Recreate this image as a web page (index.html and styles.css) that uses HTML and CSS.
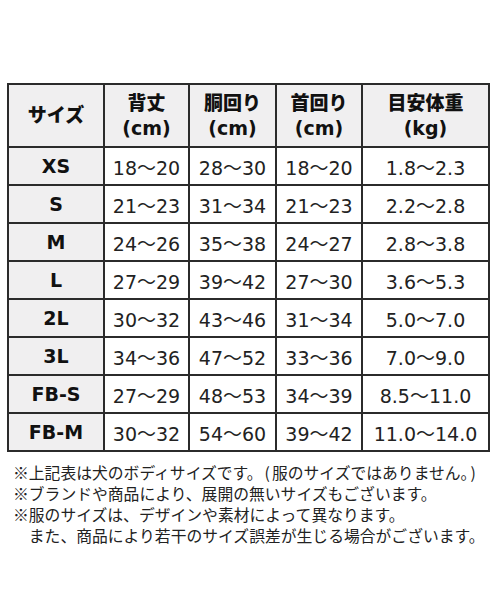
FILE: index.html
```html
<!DOCTYPE html>
<html lang="ja">
<head>
<meta charset="utf-8">
<link rel="stylesheet" href="styles.css">
</head>
<body>
<div class="page">
  <table class="size-table">
    <colgroup>
      <col class="c1"><col class="c2"><col class="c3"><col class="c4"><col class="c5">
    </colgroup>
    <thead>
      <tr>
        <th>サイズ</th>
        <th>背丈<br>(cm)</th>
        <th>胴回り<br>(cm)</th>
        <th>首回り<br>(cm)</th>
        <th>目安体重<br>(kg)</th>
      </tr>
    </thead>
    <tbody>
      <tr><th>XS</th><td>18〜20</td><td>28〜30</td><td>18〜20</td><td>1.8〜2.3</td></tr>
      <tr><th>S</th><td>21〜23</td><td>31〜34</td><td>21〜23</td><td>2.2〜2.8</td></tr>
      <tr><th>M</th><td>24〜26</td><td>35〜38</td><td>24〜27</td><td>2.8〜3.8</td></tr>
      <tr><th>L</th><td>27〜29</td><td>39〜42</td><td>27〜30</td><td>3.6〜5.3</td></tr>
      <tr><th>2L</th><td>30〜32</td><td>43〜46</td><td>31〜34</td><td>5.0〜7.0</td></tr>
      <tr><th>3L</th><td>34〜36</td><td>47〜52</td><td>33〜36</td><td>7.0〜9.0</td></tr>
      <tr><th>FB-S</th><td>27〜29</td><td>48〜53</td><td>34〜39</td><td>8.5〜11.0</td></tr>
      <tr><th>FB-M</th><td>30〜32</td><td>54〜60</td><td>39〜42</td><td>11.0〜14.0</td></tr>
    </tbody>
  </table>
  <div class="notes">
    <p>※上記表は犬のボディサイズです。<span class="paren">(</span>服のサイズではありません。<span class="paren">)</span></p>
    <p>※ブランドや商品により、展開の無いサイズもございます。</p>
    <p>※服のサイズは、デザインや素材によって異なります。</p>
    <p class="indent">また、商品により若干のサイズ誤差が生じる場合がございます。</p>
  </div>
</div>
</body>
</html>
```

FILE: styles.css
```css
html, body {
  margin: 0;
  padding: 0;
  background: #ffffff;
}
.page {
  padding: 83px 0 0 7px;
  color: #1a1a1a;
}
.size-table {
  border-collapse: collapse;
  table-layout: fixed;
  width: 481px;
  font-family: "DejaVu Sans", "Noto Sans CJK JP", sans-serif;
}
.c1 { width: 96px; }
.c2 { width: 85px; }
.c3 { width: 87px; }
.c4 { width: 86px; }
.c5 { width: 127px; }
.size-table th,
.size-table td {
  border: 2px solid #2b2b2b;
  text-align: center;
  padding: 0;
  height: 36px;
}
.size-table thead th {
  height: 61px;
  background: #f0eff0;
  font-size: 19px;
  font-weight: 800;
  line-height: 25px;
  color: #111;
}
.size-table tbody th {
  background: #f0eff0;
  font-size: 19px;
  font-weight: bold;
  color: #111;
}
.size-table td {
  font-size: 19px;
  font-weight: normal;
  color: #222;
}
.notes {
  margin-top: 10px;
  padding-left: 6px;
  font-family: "Noto Sans CJK JP", sans-serif;
  font-size: 15.8px;
  line-height: 21px;
  color: #222;
}
.notes p {
  margin: 0;
  white-space: nowrap;
}
.notes .indent {
  padding-left: 15.8px;
}
.notes .paren {
  margin: 0 2px;
}
```
